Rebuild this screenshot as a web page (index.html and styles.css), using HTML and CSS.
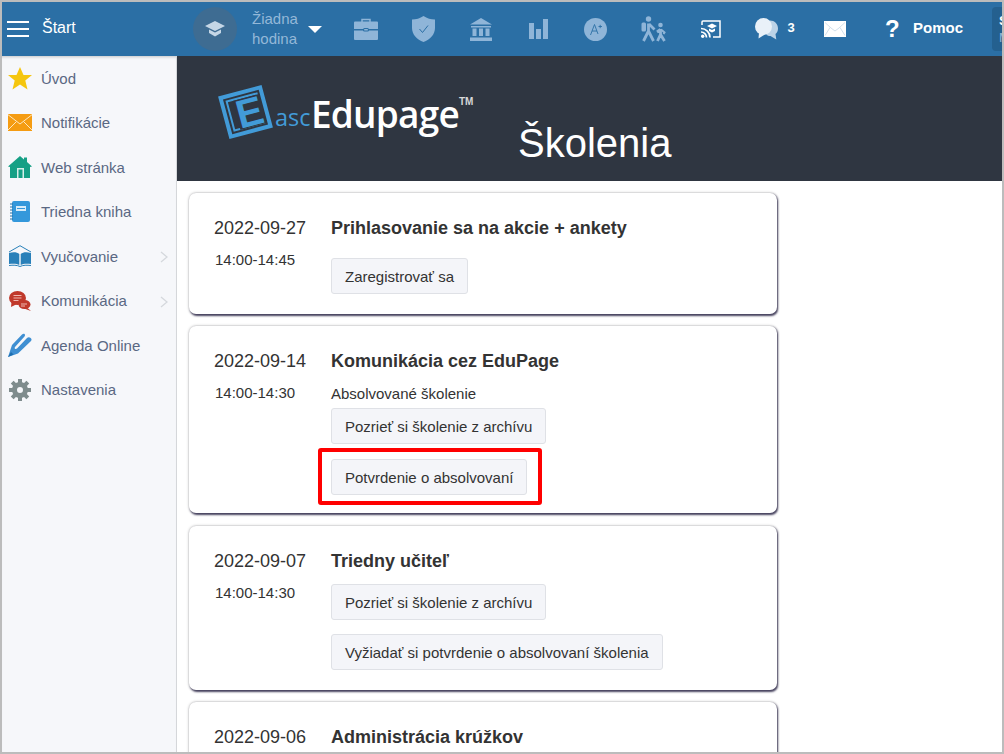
FILE: index.html
```html
<!DOCTYPE html>
<html lang="sk">
<head>
<meta charset="utf-8">
<title>Školenia</title>
<link rel="stylesheet" href="styles.css">
</head>
<body>
<div class="frame">
  <header class="topbar">
    <div class="brand">
      <svg class="burger" width="22" height="16" viewBox="0 0 22 16"><path d="M0 1h22M0 8h22M0 15h22" stroke="#fff" stroke-width="2"/></svg>
      <span class="brand-name">Štart</span>
    </div>
    <div class="lesson">
      <span class="lesson-circle">
        <svg width="20" height="16" viewBox="0 0 20 16"><path d="M10 0 20 5 10 10 0 5z" fill="#c4d6e6"/><path d="M4 8.500 10 11.500 16 8.500V12L10 15.500 4 12z" fill="#c4d6e6"/></svg>
      </span>
      <span class="lesson-name">Žiadna<br>hodina</span>
      <span class="caret"></span>
    </div>
    <nav class="tools">
      <span class="tool"><svg width="24" height="22" viewBox="0 0 24 22"><path d="M8 4V1.500h8V4" fill="none" stroke="#8fb5d8" stroke-width="1.500"/><path d="M1 3.500h22a1 1 0 0 1 1 1V11H0V4.500a1 1 0 0 1 1-1zM0 12.500h24V21a1 1 0 0 1-1 1H1a1 1 0 0 1-1-1z" fill="#8fb5d8"/><rect x="9" y="10" width="6" height="3.500" rx="1.500" fill="#2b6fa5"/><rect x="10.200" y="11" width="3.600" height="1.500" fill="#8fb5d8"/></svg></span>
      <span class="tool"><svg width="23" height="26" viewBox="0 0 23 26"><path d="M11.500 0C8 2.500 4 3.500 0 3.500V12c0 6.500 5 11.500 11.500 14C18 23.500 23 18.500 23 12V3.500C19 3.500 15 2.500 11.500 0z" fill="#8fb5d8"/><path d="M7.500 13 10.500 16.500 16 9.500" fill="none" stroke="#2b6fa5" stroke-width="1"/></svg></span>
      <span class="tool"><svg width="24" height="23" viewBox="0 0 24 23"><path d="M12 0 23 6.500H1z" fill="#8fb5d8"/><path d="M2 8h20v1.500H2zM3.500 10.500h4V18h-4zM10 10.500h4V18h-4zM16.500 10.500h4V18h-4zM1 19.500h22V23H1z" fill="#8fb5d8"/></svg></span>
      <span class="tool"><svg width="19" height="20" viewBox="0 0 19 20"><path d="M0 4h5v16H0zM7 10h5v10H7zM14 0h5v20h-5z" fill="#8fb5d8"/></svg></span>
      <span class="tool"><svg width="23" height="23" viewBox="0 0 23 23"><circle cx="11.500" cy="11.500" r="11.500" fill="#8fb5d8"/><path d="M6.500 17 10.500 6.500 14 16M8 13h5M14.500 8.500h3.500M16.200 6.800v3.400" fill="none" stroke="#2b6fa5" stroke-width=".9"/></svg></span>
      <span class="tool"><svg width="26" height="26" viewBox="0 0 26 26"><circle cx="8.500" cy="3" r="2.700" fill="#8fb5d8"/><circle cx="20.500" cy="9" r="2.300" fill="#8fb5d8"/><path d="M8.500 7.500V15M8.500 15 3.500 25M8.500 15 13.500 25M9 8 14.500 13.500M20.500 13V18.500M20.500 18.500 17.500 25M20.500 18.500 24.500 25M20.500 13.500 17 16" fill="none" stroke="#8fb5d8" stroke-width="2.800"/><rect x="1.500" y="6.500" width="4.500" height="9" rx="1.500" fill="#8fb5d8"/><path d="M21 13.500 24.500 16.500 23.500 18" fill="none" stroke="#8fb5d8" stroke-width="2"/></svg></span>
      <span class="tool"><svg width="20" height="18" viewBox="0 0 20 18"><path d="M1 5V2a1 1 0 0 1 1-1h17v16h-7" fill="none" stroke="#fff" stroke-width="1.500"/><path d="M11 3.500 16 6l-5 2.500L6 6zM8 8.500l3 1.500 3-1.500v2.500l-3 1.500-3-1.500z" fill="#fff"/><path d="M0 8.500a9 9 0 0 1 9 9M0 12a5.500 5.500 0 0 1 5.500 5.500" fill="none" stroke="#fff" stroke-width="1.700"/><circle cx="1.700" cy="16.200" r="1.700" fill="#fff"/></svg></span>
      <span class="tool tool-chat"><svg width="23" height="22" viewBox="0 0 23 22"><path d="M15 2.500c4.500 0 8 3.500 8 8 0 2.500-1 4.500-2.500 5.500l.8 5.500-5.800-3.500c-2 0-3-.5-4-1z" fill="#bcd3e7"/><ellipse cx="8.500" cy="8.500" rx="8.500" ry="8.500" fill="#e9f1f8"/><path d="M4 14.500 3.500 20.500 10 16.500z" fill="#e9f1f8"/></svg><b class="tool-count">3</b></span>
      <span class="tool"><svg width="22" height="16" viewBox="0 0 22 16"><rect width="22" height="16" fill="#fff"/><path d="M1 1.500 7 7 11 10 15 7 21 1.500M1 14.500 6 6.500M21 14.500 16 6.500" fill="none" stroke="#c6d7e6" stroke-width=".8"/></svg></span>
    </nav>
    <div class="help">
      <span class="help-mark">?</span>
      <span class="help-label">Pomoc</span>
    </div>
    <div class="user"><b>S</b><span>M</span></div>
  </header>
  <div class="main">
    <aside class="sidebar">
      <a class="side-item"><span class="side-icon"><svg width="24" height="23" viewBox="0 0 24 23"><path d="M12 0 15.500 8H24l-6.700 5.500L19.500 22.500 12 17.500 4.500 22.500 6.700 13.500 0 8h8.500z" fill="#f5c60f"/></svg></span>Úvod</a>
      <a class="side-item"><span class="side-icon"><svg width="24" height="17" viewBox="0 0 24 17"><rect width="24" height="17" fill="#f59c12"/><path d="M0 .7 12 10 24 .7M0 16 8.500 7.500M24 16 15.500 7.500" fill="none" stroke="#fde7c0" stroke-width="1"/></svg></span>Notifikácie</a>
      <a class="side-item"><span class="side-icon"><svg width="24" height="22" viewBox="0 0 24 22"><path d="M12 0 16 3.500V1.500h3V6l5 4.500-2 .5V22H2V11l-2-.5z" fill="#16a085"/><rect x="9" y="12" width="7" height="10" fill="#d6efe9"/><rect x="10.500" y="13.500" width="4" height="8.500" fill="#16a085"/></svg></span>Web stránka</a>
      <a class="side-item"><span class="side-icon"><svg width="20" height="21" viewBox="0 0 20 21"><rect x="2" width="18" height="21" rx="2" fill="#3498db"/><rect x="6" y="5" width="10" height="5" fill="#d8ecf9"/><path d="M7 7.500h8" stroke="#3498db"/><path d="M0 3h3M0 6h3M0 9h3M0 12h3M0 15h3M0 18h3" stroke="#2573a8"/></svg></span>Triedna kniha</a>
      <a class="side-item side-more"><span class="side-icon"><svg width="24" height="22" viewBox="0 0 24 22"><path d="M1 7 12 .7 23 7" fill="none" stroke="#2980b9"/><path d="M1 8c4-1 8-1 10.300 1v11C9 18.500 5 18.500 1 19zM23 8c-4-1-8-1-10.300 1v11c2.300-1.500 6.300-1.500 10.300-1z" fill="#2980b9"/><path d="M1 20.500c4-.5 8-.5 11 1 3-1.500 7-1.500 11-1" fill="none" stroke="#2980b9"/></svg></span>Vyučovanie<svg class="chevron" width="8" height="12" viewBox="0 0 8 12"><path d="M1 1 7 6 1 11" fill="none" stroke="#d5d8dd" stroke-width="1.300"/></svg></a>
      <a class="side-item side-more"><span class="side-icon"><svg width="22" height="20" viewBox="0 0 22 20"><ellipse cx="8.500" cy="7" rx="8.500" ry="7" fill="#c0392b"/><path d="M2.500 11 2 16 8 13z" fill="#c0392b"/><ellipse cx="15.500" cy="13.500" rx="6" ry="4.500" fill="#c0392b"/><path d="M18 16.500 22 20 15 17.500z" fill="#c0392b"/><path d="M4.500 4.500h8M4.500 7h8M4.500 9.500h5M12 13h6M12 15h4" stroke="#f0b8b0" stroke-width="1.200"/></svg></span>Komunikácia<svg class="chevron" width="8" height="12" viewBox="0 0 8 12"><path d="M1 1 7 6 1 11" fill="none" stroke="#d5d8dd" stroke-width="1.300"/></svg></a>
      <a class="side-item"><span class="side-icon"><svg width="24" height="24" viewBox="0 0 24 24"><path d="M0 24 4 12 14 1.500c2-2 4 0 2.500 2L7 14c-1 1.500.5 2.500 2 1.500L19 5c2-2 6 .5 4 3L10 20.500z" fill="#3f8fd2"/><path d="M0 24 3 19l2.500 2.500z" fill="#1f6fb0"/></svg></span>Agenda Online</a>
      <a class="side-item"><span class="side-icon"><svg width="22" height="22" viewBox="0 0 22 22"><circle cx="11" cy="11" r="5.500" fill="none" stroke="#7f8c8d" stroke-width="5"/><path d="M11 0v4M11 18v4M0 11h4M18 11h4M3.200 3.200 6 6M16 16l2.800 2.800M18.800 3.200 16 6M6 16l-2.800 2.800" stroke="#7f8c8d" stroke-width="4"/></svg></span>Nastavenia</a>
    </aside>
    <div class="content">
      <div class="banner">
        <div class="logo">
          <span class="logo-mark"><span class="logo-inner"><span class="logo-e">E</span></span></span>
          <span class="logo-asc">asc</span>
          <span class="logo-name">Edupage</span>
          <span class="logo-tm">TM</span>
        </div>
        <h1 class="page-title">Školenia</h1>
      </div>
      <div class="cards">
        <section class="card">
          <div class="when"><div class="date">2022-09-27</div><div class="time">14:00-14:45</div></div>
          <div class="body">
            <h2 class="title">Prihlasovanie sa na akcie + ankety</h2>
            <div class="actions actions-loose"><a class="btn">Zaregistrovať sa</a></div>
          </div>
        </section>
        <section class="card card-status">
          <div class="when"><div class="date">2022-09-14</div><div class="time">14:00-14:30</div></div>
          <div class="body">
            <h2 class="title">Komunikácia cez EduPage</h2>
            <div class="status">Absolvované školenie</div>
            <div class="actions actions-status">
              <a class="btn">Pozrieť si školenie z archívu</a>
              <a class="btn btn-marked">Potvrdenie o absolvovaní</a>
            </div>
          </div>
        </section>
        <section class="card">
          <div class="when"><div class="date">2022-09-07</div><div class="time">14:00-14:30</div></div>
          <div class="body">
            <h2 class="title">Triedny učiteľ</h2>
            <div class="actions">
              <a class="btn">Pozrieť si školenie z archívu</a>
              <a class="btn">Vyžiadať si potvrdenie o absolvovaní školenia</a>
            </div>
          </div>
        </section>
        <section class="card">
          <div class="when"><div class="date">2022-09-06</div></div>
          <div class="body">
            <h2 class="title">Administrácia krúžkov</h2>
          </div>
        </section>
      </div>
    </div>
  </div>
</div>
</body>
</html>
```

FILE: styles.css
```css
* { box-sizing: border-box; }
html, body { margin: 0; padding: 0; height: 100%; overflow: hidden; background: #fff; }
body { font-family: "Liberation Sans", Arial, sans-serif; color: #333; }

.frame {
  width: 1004px;
  height: 754px;
  border: 2px solid #bcbcbc;
  display: flex;
  flex-direction: column;
  overflow: hidden;
}

.topbar {
  flex: 0 0 54px;
  background: #2b6fa5;
  display: flex;
  align-items: center;
  color: #fff;
}
.brand { width: 191px; display: flex; align-items: center; flex: none; padding-left: 5px; }
.burger { margin-right: 13px; }
.brand-name { font-size: 16px; line-height: 18px; margin-top: -2px; }

.lesson { display: flex; align-items: center; width: 143px; flex: none; }
.lesson-circle {
  width: 44px; height: 44px; border-radius: 50%;
  background: #3e6c92;
  display: flex; align-items: center; justify-content: center;
  flex: none;
}
.lesson-name { font-size: 15px; line-height: 20px; color: #94b8d8; margin-left: 15px; }
.caret {
  width: 0; height: 0; margin-left: 10px;
  border-left: 7px solid transparent; border-right: 7px solid transparent; border-top: 7px solid #fff;
}

.tools { display: flex; align-items: center; flex: none; margin-left: 1px; }
.tool { width: 57.5px; height: 54px; display: flex; align-items: center; justify-content: center; position: relative; flex: none; }
.tool-chat { width: 67px; justify-content: flex-start; padding-left: 15px; }
.tool-count { position: absolute; left: 48px; top: 18px; font-size: 13px; color: #fff; }

.help { display: flex; align-items: center; margin-left: 22px; flex: none; width: 106px; }
.help-mark { font-size: 24px; font-weight: bold; width: 28px; margin-left: -1px; }
.help-label { font-size: 15px; font-weight: bold; margin-top: -4px; }

.user {
  flex: none; width: 40px; height: 44px;
  background: #24608f; border-radius: 4px; padding: 5px 7px;
  font-size: 13px; line-height: 17px;
  display: flex; flex-direction: column;
}
.user span { color: #94b8d8; }

.main { flex: 1; display: flex; min-height: 0; }

.sidebar {
  flex: 0 0 175px;
  background: #f6f7fa;
  border-right: 1px solid #d5d7da;
  box-shadow: inset 0 3px 3px -2px rgba(0,0,0,.2);
}
.side-item {
  height: 44.5px;
  display: flex; align-items: center;
  font-size: 15px; color: #5a6883;
  position: relative;
}
.side-icon { width: 39px; padding-left: 4px; padding-right: 7px; display: flex; justify-content: center; flex: none; }
.chevron { position: absolute; left: 158px; top: 17px; }

.content { flex: 1; min-width: 0; display: flex; flex-direction: column; }

.banner {
  flex: 0 0 125px;
  background: #2f3641;
  display: flex;
  color: #fff;
}
.logo { width: 341px; flex: none; position: relative; display: flex; }
.logo-mark {
  position: absolute; left: 46px; top: 34px;
  width: 45px; height: 44px;
  border: 4px solid #429bd8;
  padding: 2px;
  transform: rotate(-15deg);
  display: flex;
}
.logo-inner {
  flex: 1;
  border: 2px solid #429bd8;
  display: flex; align-items: center; justify-content: center;
}
.logo-e {
  font-size: 40px; line-height: 30px; font-weight: bold; color: #429bd8;
  background: #2f3641;
  margin-right: -8px; margin-top: 2px;
}
.logo-asc { position: absolute; left: 98px; top: 45px; font-family: "Open Sans", sans-serif; font-size: 23.500px; line-height: 32px; color: #429bd8; }
.logo-name { position: absolute; left: 134px; top: 33px; font-family: "Open Sans", sans-serif; font-size: 37px; line-height: 50px; font-weight: 600; letter-spacing: -.8px; color: #fff; }
.logo-tm { position: absolute; left: 282px; top: 40px; font-size: 10px; line-height: 11px; font-weight: bold; color: #d8d8d8; }

.page-title { margin: 64px 0 0; font-size: 40px; font-weight: normal; line-height: 46px; }

.cards { padding: 12px 0 0 12px; display: flex; flex-direction: column; gap: 12px; }
.card {
  width: 588px;
  flex: none;
  background: #fff;
  border-radius: 7px;
  padding: 24px 25px 20px;
  display: flex;
  box-shadow: 1px 1.500px 2px rgba(30,25,60,.8), 0 0 3px rgba(0,0,0,.3);
}
.card-status { padding-bottom: 18px; margin-bottom: 1px; }
.when { width: 117px; flex: none; }
.date { font-size: 18px; line-height: 22px; }
.time { font-size: 15px; line-height: 18px; margin-top: 12px; padding-left: 1px; }
.body { flex: 1; }
.title { margin: 0; font-size: 18px; line-height: 22px; font-weight: bold; }
.status { font-size: 15px; line-height: 18px; margin-top: 13px; }

.actions { display: flex; flex-direction: column; align-items: flex-start; gap: 14px; margin-top: 12px; }
.actions-loose { margin-top: 19px; }
.actions-status { margin-top: 5px; gap: 15px; }
.btn {
  height: 36px;
  padding: 0 13px;
  display: flex; align-items: center;
  font-size: 15px; color: #333;
  background: #f4f5f9;
  border: 1px solid #dfe1e6;
  border-radius: 3px;
  position: relative;
}
.btn-marked::after {
  content: "";
  position: absolute;
  inset: -12px -16px -11px -14px;
  border: 4px solid #f00;
  border-radius: 3px;
}
```
